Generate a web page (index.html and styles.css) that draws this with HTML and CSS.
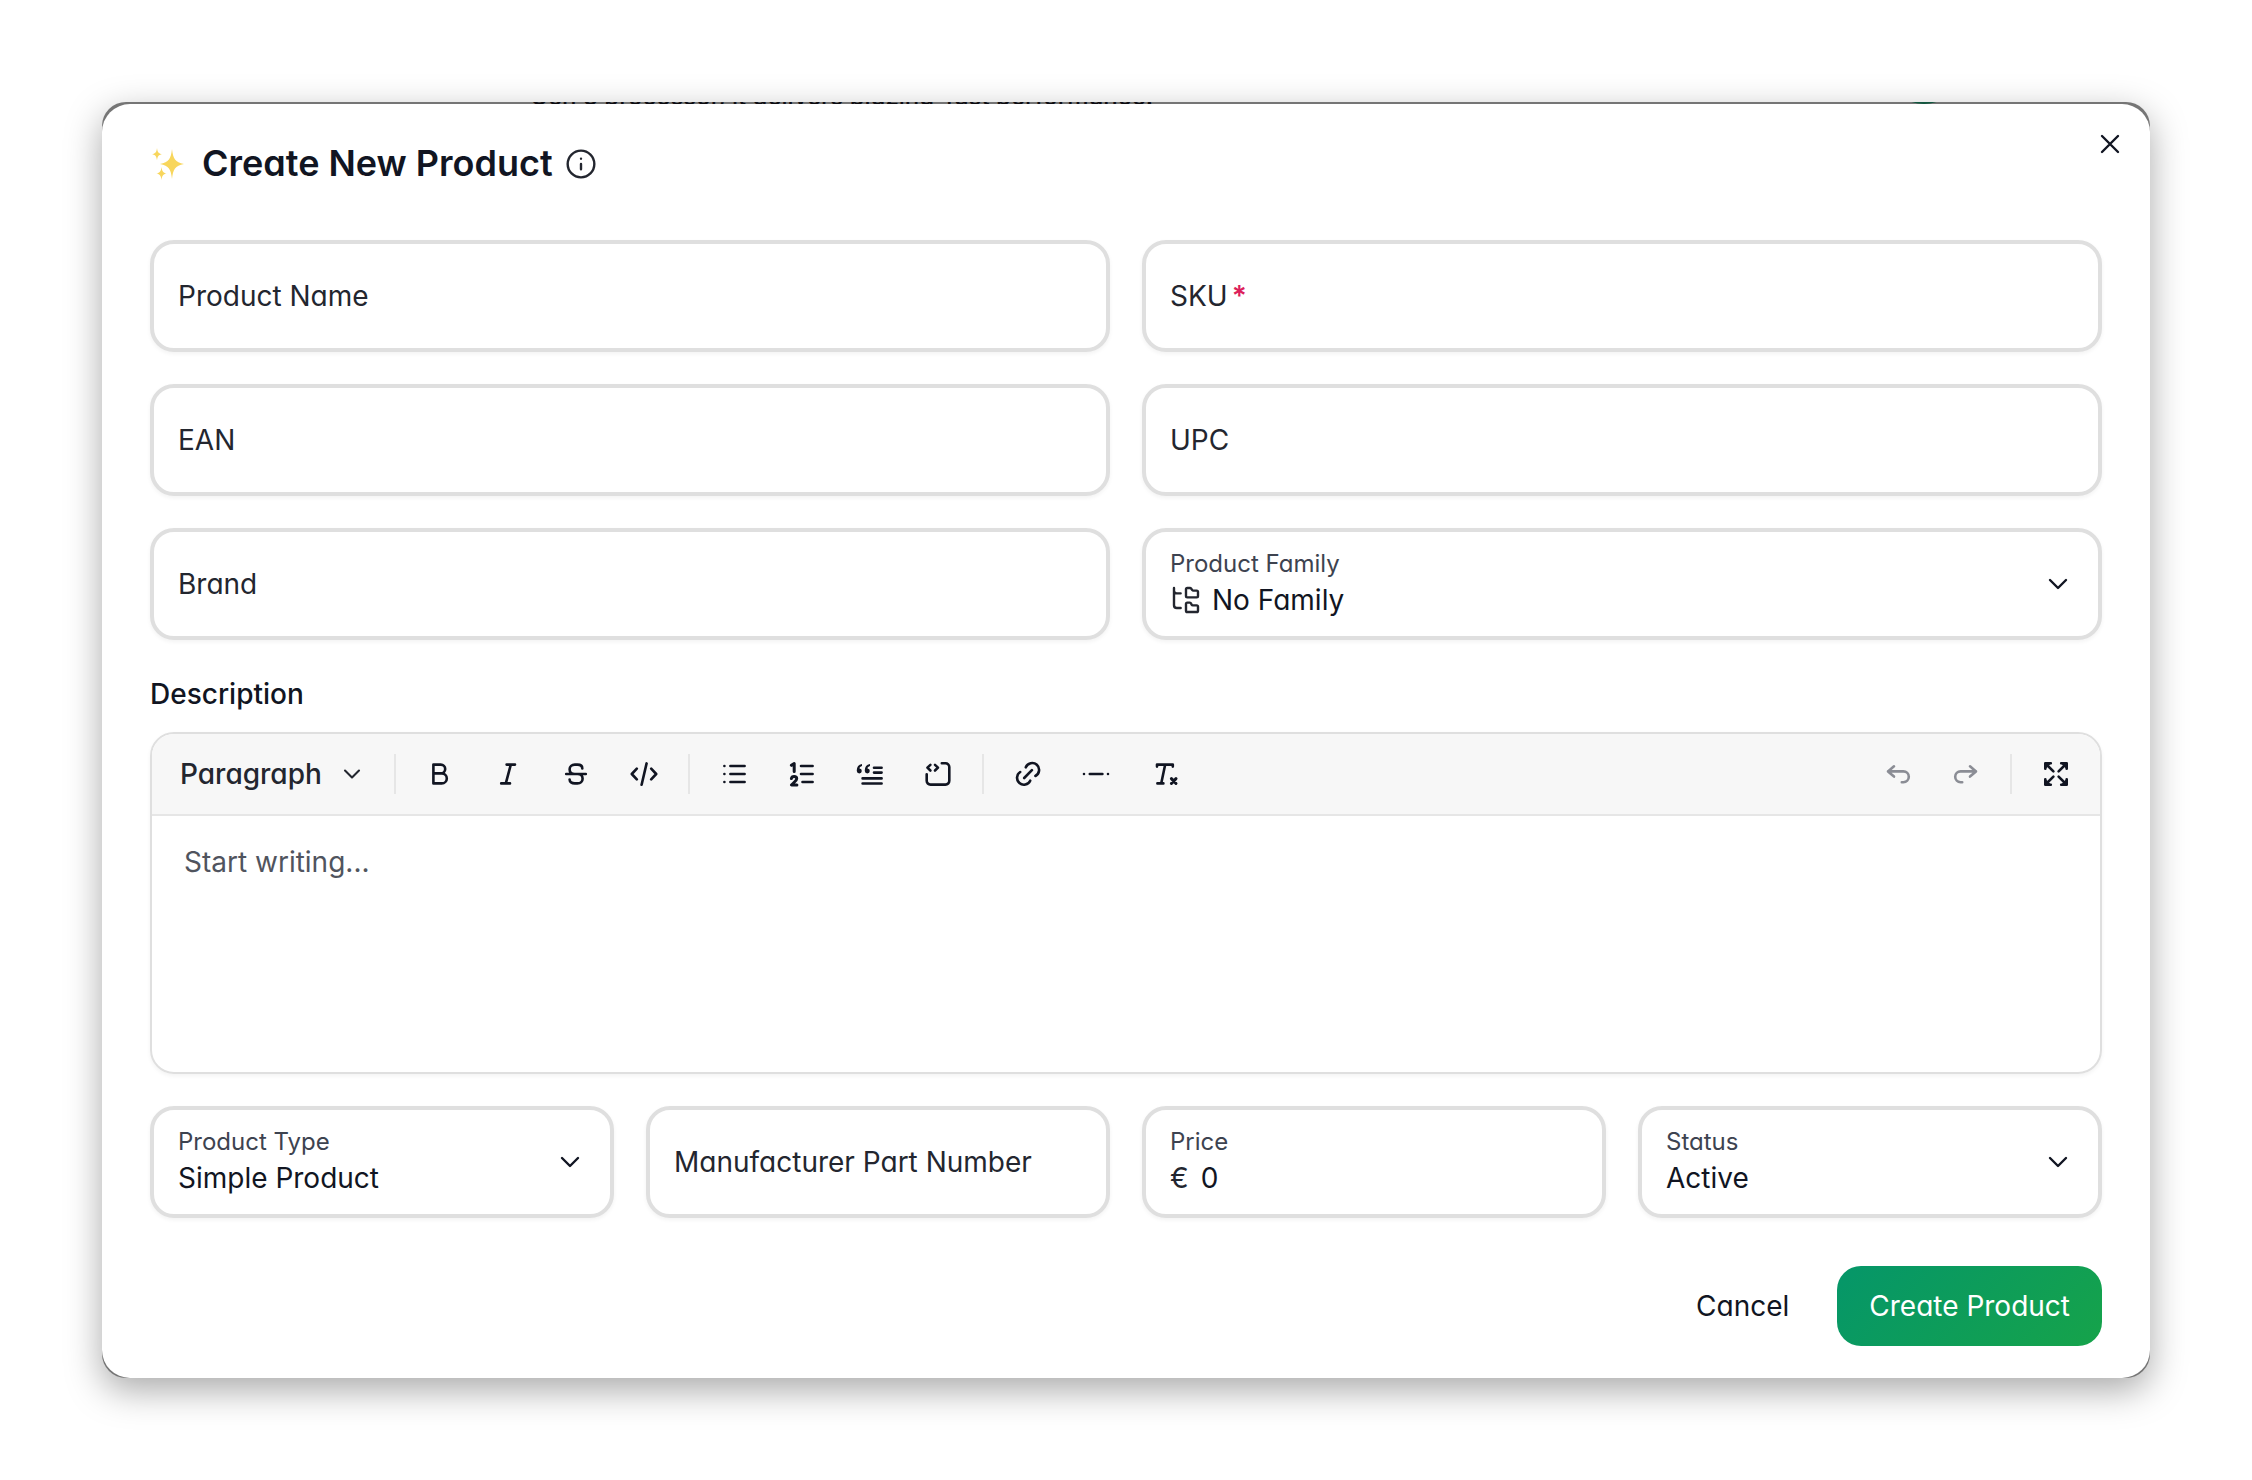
FILE: index.html
```html
<!DOCTYPE html>
<html lang="en">
<head>
<meta charset="utf-8">
<meta name="viewport" content="width=device-width, initial-scale=1">
<title>Create New Product</title>
<link rel="stylesheet" href="styles.css">
</head>
<body>
<div class="window">
  <div class="backdrop" aria-hidden="true">
    <p class="backdrop-text">Gen 3 processor, it delivers blazing-fast performance.</p>
    <span class="backdrop-dot"></span>
  </div>
  <main class="dialog" role="dialog" aria-labelledby="dialog-title">
    <header class="dialog-header">
      <svg class="icon-sparkles" viewBox="0 0 36 36" aria-hidden="true">
        <path d="M22 3c1.100 9.500 3 13.500 12 15-9 1.500-10.900 5.500-12 15-1.100-9.500-3-13.500-12-15 9-1.500 10.900-5.500 12-15z"/>
        <path d="M7 2c.6 4.200 1.500 5.600 5 6.200-3.500.6-4.400 2-5 6.200-.6-4.200-1.500-5.600-5-6.200 3.500-.6 4.400-2 5-6.200z"/>
        <path d="M11.500 21c.6 4.200 1.500 5.900 5 6.500-3.500.6-4.400 2.300-5 6.500-.6-4.200-1.500-5.900-5-6.500 3.500-.6 4.400-2.300 5-6.500z"/>
      </svg>
      <h1 class="dialog-title" id="dialog-title">Create New Product</h1>
      <button class="info-button" type="button" aria-label="About products">
        <svg class="icon" viewBox="0 0 24 24"><circle cx="12" cy="12" r="10"/><path d="M12 16v-4M12 8h.01"/></svg>
      </button>
    </header>
    <button class="close-button" type="button" aria-label="Close">
      <svg class="icon" viewBox="0 0 24 24"><path d="M18 6 6 18M6 6l12 12"/></svg>
    </button>

    <form class="form">
      <div class="grid grid-two">
        <div class="field field-empty"><label for="name">Product Name</label><input id="name" type="text"></div>
        <div class="field field-empty"><label for="sku">SKU<span class="required">*</span></label><input id="sku" type="text" required></div>
        <div class="field field-empty"><label for="ean">EAN</label><input id="ean" type="text"></div>
        <div class="field field-empty"><label for="upc">UPC</label><input id="upc" type="text"></div>
        <div class="field field-empty"><label for="brand">Brand</label><input id="brand" type="text"></div>
        <div class="field field-select">
          <div class="field-main">
            <label for="family">Product Family</label>
            <div class="value-row">
              <svg class="icon icon-tree" viewBox="0 0 24 24"><path d="M20 10a1 1 0 0 0 1-1V6a1 1 0 0 0-1-1h-2.500a1 1 0 0 1-.8-.4l-.9-1.200A1 1 0 0 0 15 3h-2a1 1 0 0 0-1 1v5a1 1 0 0 0 1 1ZM20 21a1 1 0 0 0 1-1v-3a1 1 0 0 0-1-1h-2.900a1 1 0 0 1-.88-.55l-.42-.85a1 1 0 0 0-.92-.6H13a1 1 0 0 0-1 1v5a1 1 0 0 0 1 1ZM3 5a2 2 0 0 0 2 2h3M3 3v13a2 2 0 0 0 2 2h3"/></svg>
              <select id="family"><option>No Family</option></select>
            </div>
          </div>
          <svg class="icon chevron" viewBox="0 0 24 24"><path d="m6 9 6 6 6-6"/></svg>
        </div>
      </div>

      <section class="description">
        <label class="section-label" for="description">Description</label>
        <div class="editor">
          <div class="toolbar" role="toolbar" aria-label="Text formatting">
            <button class="style-button" type="button">Paragraph
              <svg class="icon icon-small" viewBox="0 0 24 24"><path d="m6 9 6 6 6-6"/></svg>
            </button>
            <span class="divider"></span>
            <button class="tool" type="button" aria-label="Bold"><svg viewBox="0 0 32 32"><path d="M9.400 6.600h7.400a4.400 4.400 0 0 1 0 8.800H9.400zM9.400 15.400h8.400a5 5 0 0 1 0 10H9.400z"/></svg></button>
            <button class="tool" type="button" aria-label="Italic"><svg viewBox="0 0 32 32"><path d="M14.600 6.600h8.400M9.200 25.400h8.800M18.800 6.600l-5 18.800"/></svg></button>
            <button class="tool" type="button" aria-label="Strikethrough"><svg viewBox="0 0 32 32"><path d="M6.200 16h19.600M22.300 10.400c0-2.400-2-3.800-4.800-3.800h-2.700c-3 0-5.200 1.900-5.200 4.600 0 2.800 1.900 4.800 5.200 4.800h2.700c3.200 0 5.100 1.800 5.100 4.700 0 2.800-2.100 4.700-5.100 4.700h-2.700c-3 0-5.200-1.400-5.200-3.900"/></svg></button>
            <button class="tool" type="button" aria-label="Code"><svg viewBox="0 0 32 32"><path d="M8.800 10.600 3.800 16l5 5.400M23.200 10.600l5 5.400-5 5.400M18.600 5.400l-5 21.400"/></svg></button>
            <span class="divider"></span>
            <button class="tool" type="button" aria-label="Bullet list"><svg viewBox="0 0 32 32"><path d="M6.400 8h.01M6.400 16h.01M6.400 24h.01M12.400 8h14.200M12.400 16h14.200M12.400 24h14.200"/></svg></button>
            <button class="tool" type="button" aria-label="Numbered list"><svg viewBox="0 0 32 32"><path d="M15 8h11.600M15 16h11.600M16.500 24h10.100"/><path class="heavy" d="M5.400 7.300 8.200 5.500v7.900M5.400 20.600c.2-1.400 1.300-2.100 2.700-2.100 1.500 0 2.600.8 2.600 2.200 0 2-2.800 3.500-5.200 6.200h5.400"/></svg></button>
            <button class="tool" type="button" aria-label="Quote"><svg viewBox="0 0 32 32"><path d="M20 9.700h7.600M20 14.600h7.600M8.600 20.400h19M8.600 25.500h19"/><path class="solid" d="M8 6C4.500 6.600 2.800 8.800 2.800 12.300v.8a2.500 2.500 0 1 0 2.700-2.600c.1-1.200.9-2 2.500-2.400zM16 6c-3.500.6-5.200 2.800-5.200 6.300v.8a2.500 2.500 0 1 0 2.700-2.600c.1-1.200.9-2 2.500-2.400z"/></svg></button>
            <button class="tool" type="button" aria-label="Code block"><svg viewBox="0 0 32 32"><path d="M19.800 5.300h3.700a3.800 3.800 0 0 1 3.800 3.800v13.700a3.800 3.800 0 0 1-3.800 3.800h-15a3.800 3.800 0 0 1-3.800-3.800v-6.600M8.400 6.900 5.400 9.600l3 2.900M13 6.900l3 2.700-3 2.900"/></svg></button>
            <span class="divider"></span>
            <button class="tool" type="button" aria-label="Link"><svg viewBox="0 0 32 32"><path d="M13.800 9.300a6.900 6.900 0 1 1 9.600 8.700M8.200 14a6.900 6.900 0 1 0 10 8.700M12.200 20l7.700-7.800"/></svg></button>
            <button class="tool" type="button" aria-label="Horizontal rule"><svg viewBox="0 0 32 32"><path d="M4 16h.01M28 16h.01M9.800 16h12.600"/></svg></button>
            <button class="tool" type="button" aria-label="Clear formatting"><svg viewBox="0 0 32 32"><path d="M9 8.600v-2h15.800v2M17.200 6.600l-4 18.800M9.400 25.400h6"/><path class="heavy" d="m23.400 20.600 4.600 4.900M28 20.600l-4.600 4.900"/></svg></button>
            <span class="spacer"></span>
            <button class="tool" type="button" aria-label="Undo" disabled><svg viewBox="0 0 32 32"><path d="M12 8.300 6 13.400l6 5.200M6 13.400h15.400a5.400 5.400 0 0 1 0 10.800h-1.600"/></svg></button>
            <button class="tool" type="button" aria-label="Redo" disabled><svg viewBox="0 0 32 32"><path d="m20 8.300 6 5.100-6 5.200M26 13.400H10.600a5.400 5.400 0 0 0 0 10.800h1.600"/></svg></button>
            <span class="divider"></span>
            <button class="tool" type="button" aria-label="Full screen"><svg viewBox="0 0 32 32"><path d="m6 6 7.400 7.400M26 6l-7.400 7.400M6 26l7.400-7.400M26 26l-7.400-7.400M5.300 10.800V5.300h5.500M21.200 5.300h5.500v5.500M5.300 21.200v5.500h5.500M21.200 26.700h5.500v-5.500"/><path class="solid" d="M5 5h6.500L5 11.500zM27 5h-6.500l6.500 6.500zM5 27h6.500L5 20.500zM27 27h-6.500l6.500-6.500z"/></svg></button>
          </div>
          <textarea id="description" class="editor-body" placeholder="Start writing..."></textarea>
        </div>
      </section>

      <div class="grid grid-four">
        <div class="field field-select">
          <div class="field-main">
            <label for="type">Product Type</label>
            <div class="value-row"><select id="type"><option>Simple Product</option></select></div>
          </div>
          <svg class="icon chevron" viewBox="0 0 24 24"><path d="m6 9 6 6 6-6"/></svg>
        </div>
        <div class="field field-empty"><label for="mpn">Manufacturer Part Number</label><input id="mpn" type="text"></div>
        <div class="field">
          <div class="field-main">
            <label for="price">Price</label>
            <div class="value-row"><span class="currency">€</span><input id="price" type="text" inputmode="decimal" value="0"></div>
          </div>
        </div>
        <div class="field field-select">
          <div class="field-main">
            <label for="status">Status</label>
            <div class="value-row"><select id="status"><option>Active</option></select></div>
          </div>
          <svg class="icon chevron" viewBox="0 0 24 24"><path d="m6 9 6 6 6-6"/></svg>
        </div>
      </div>

      <footer class="actions">
        <button class="button" type="button">Cancel</button>
        <button class="button button-primary" type="submit">Create Product</button>
      </footer>
    </form>
  </main>
</div>
</body>
</html>
```
FILE: styles.css
```css
:root {
  --ink: #111522;
  --ink-soft: #23262f;
  --label: #3d4350;
  --border: #dfdfdf;
}

* { box-sizing: border-box; }

body {
  margin: 0;
  padding: 102px;
  background: #fff;
  color: var(--ink);
  font-family: Inter, "Liberation Sans", sans-serif;
  font-size: 28px;
  line-height: 40px;
  font-feature-settings: "cv11";
}

button, input, select, textarea {
  margin: 0;
  padding: 0;
  border: 0;
  outline: 0;
  background: none;
  color: inherit;
  font: inherit;
  font-feature-settings: inherit;
  letter-spacing: inherit;
}

svg { display: block; flex: none; }

.window {
  overflow: hidden;
  border-radius: 24px;
  background: #757575;
  box-shadow: 0 12px 36px rgba(0, 0, 0, .34);
}

/* Sliver of the dimmed page that shows above the dialog */
.backdrop {
  display: flex;
  align-items: flex-end;
  justify-content: space-between;
  height: 2px;
  padding: 0 186px 0 428px;
  overflow: hidden;
}

.backdrop-text {
  margin: 0;
  color: #0d0d12;
  font-size: 24px;
  line-height: 14px;
  font-weight: 500;
}

.backdrop-dot {
  width: 80px;
  height: 80px;
  border-radius: 50%;
  background: #12573f;
}

.dialog {
  position: relative;
  padding: 36px 48px 32px;
  border-radius: 28px;
  background: #fff;
}

.dialog-header {
  display: flex;
  align-items: center;
  height: 48px;
  margin-bottom: 52px;
}

.icon-sparkles { width: 36px; height: 36px; fill: #f8d65c; }

.dialog-title {
  margin: 0 12px 0 16px;
  padding-bottom: 2px;
  font-size: 36px;
  line-height: 44px;
  font-weight: 600;
}

.icon {
  width: 32px;
  height: 32px;
  fill: none;
  stroke: currentColor;
  stroke-width: 1.8;
  stroke-linecap: round;
  stroke-linejoin: round;
}

.icon-small { width: 28px; height: 28px; }

.info-button { color: var(--ink-soft); }

.close-button {
  position: absolute;
  top: 24px;
  right: 24px;
}

.grid { display: grid; gap: 32px; }
.grid-two { grid-template-columns: repeat(2, minmax(0, 1fr)); }
.grid-four { grid-template-columns: repeat(4, minmax(0, 1fr)); }

.form { display: flex; flex-direction: column; gap: 32px; }

.field {
  display: flex;
  align-items: center;
  min-height: 112px;
  padding: 0 24px;
  border: 4px solid var(--border);
  border-radius: 24px;
  background: #fff;
  box-shadow: 0 2px 4px rgba(0, 0, 0, .05);
}

.field-main { flex: 1; min-width: 0; }

.field label {
  display: block;
  color: var(--label);
  font-size: 24px;
  line-height: 32px;
}

/* Empty fields show their label in place of the value */
.field-empty { display: grid; }

.field-empty label,
.field-empty input { grid-area: 1 / 1; }

.field-empty label {
  color: var(--ink-soft);
  font-size: 28px;
  line-height: 40px;
}

.required { margin-left: 4px; color: #dc1f5c; font-weight: 600; }

.value-row { display: flex; align-items: center; height: 40px; }

.value-row select,
.value-row input {
  flex: 1;
  min-width: 0;
  height: 40px;
  appearance: none;
}

.icon-tree { margin-right: 10px; color: var(--ink-soft); }
.currency { margin-right: 12px; color: var(--ink-soft); }

.description { display: flex; flex-direction: column; gap: 16px; }
.section-label { line-height: 44px; font-weight: 500; }

.editor {
  overflow: hidden;
  border: 2px solid var(--border);
  border-radius: 24px;
  box-shadow: 0 2px 4px rgba(0, 0, 0, .05);
}

.toolbar {
  display: flex;
  align-items: center;
  gap: 4px;
  height: 82px;
  padding: 0 12px;
  border-bottom: 2px solid #e6e6e6;
  background: #f7f7f7;
}

.style-button {
  display: flex;
  align-items: center;
  gap: 16px;
  height: 64px;
  padding: 0 16px;
  color: var(--ink-soft);
  font-weight: 500;
}

.divider {
  width: 2px;
  height: 40px;
  margin: 0 8px;
  background: #e6e6e6;
}

.spacer { flex: 1; }

.tool {
  display: grid;
  place-items: center;
  width: 64px;
  height: 64px;
}

.tool:disabled { color: #8b8d95; }

.tool svg {
  width: 32px;
  height: 32px;
  fill: none;
  stroke: currentColor;
  stroke-width: 2.6;
  stroke-linecap: round;
  stroke-linejoin: round;
}

.tool .heavy { stroke-width: 3; }
.tool .solid { fill: currentColor; stroke: none; }

.editor-body {
  display: block;
  width: 100%;
  height: 256px;
  padding: 24px 32px;
  line-height: 44px;
  font-feature-settings: normal;
  resize: none;
}

.editor-body::placeholder { color: #50545e; opacity: 1; }

.actions {
  display: flex;
  justify-content: flex-end;
  gap: 16px;
  margin-top: 16px;
}

.button {
  height: 80px;
  padding: 0 32px;
  border-radius: 24px;
}

.button-primary {
  background: linear-gradient(135deg, #059669, #16a34a);
  color: #fff;
}
```
